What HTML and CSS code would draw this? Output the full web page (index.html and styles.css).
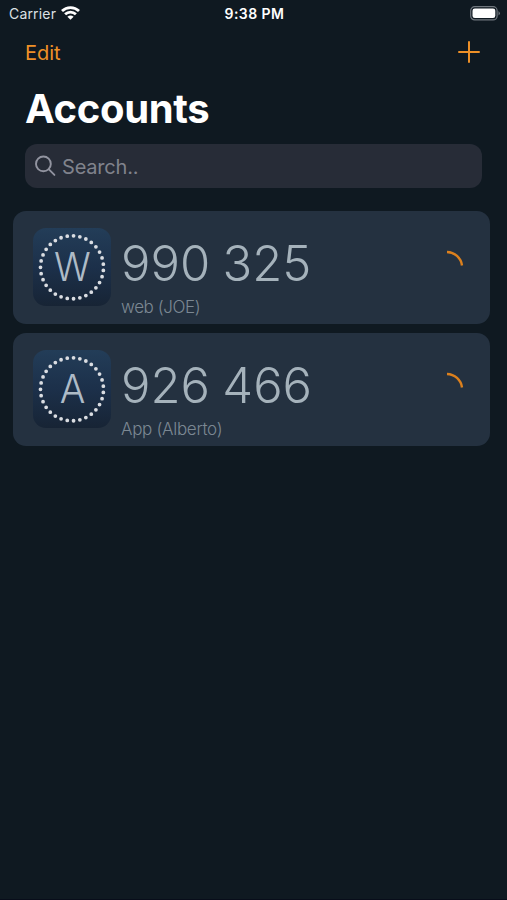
FILE: index.html
```html
<!DOCTYPE html>
<html lang="en">
<head>
<meta charset="utf-8">
<title>Accounts</title>
<link rel="stylesheet" href="styles.css">
</head>
<body>
<div class="status">
  <div class="carrier"><span>Carrier</span>
    <svg width="19" height="14" viewBox="0 0 19 14" fill="none" stroke="#fff" stroke-width="2.8"><path d="M1 5.1C5.8.4 13.2.4 18 5.1M4.1 8.3C7.2 5.3 11.8 5.3 14.9 8.3"/><path d="M6.4 10.7Q9.5 8.1 12.6 10.7L9.5 13.8Z" fill="#fff" stroke="none"/></svg>
  </div>
  <div class="time">9:38 PM</div>
  <svg class="battery" width="31" height="15" viewBox="0 0 31 15"><rect x=".7" y=".7" width="26.4" height="13.2" rx="4" fill="none" stroke="#70777e" stroke-width="1.2"/><rect x="2.5" y="2.5" width="22.8" height="9.6" rx="2.3" fill="#fff"/><path d="M28.5 5Q31.3 7.3 28.5 9.6Z" fill="#70777e"/></svg>
</div>
<nav class="nav">
  <span class="edit">Edit</span>
  <svg width="22" height="22" viewBox="0 0 22 22" stroke="#ee9027" stroke-width="2" stroke-linecap="round"><path d="M11 1V21M1 11H21"/></svg>
</nav>
<h1>Accounts</h1>
<div class="search">
  <svg width="22" height="22" viewBox="0 0 22 22" fill="none" stroke="#9294a0" stroke-width="1.9" stroke-linecap="round"><circle cx="8.4" cy="8.9" r="7.4"/><path d="M13.9 14.4L19.4 19.9"/></svg>
  <span>Search..</span>
</div>
<main class="list">
  <article class="card">
    <div class="icon"><svg width="78" height="78" viewBox="0 0 78 78"><circle class="dots" cx="39" cy="39.3" r="31.5" pathLength="310" transform="rotate(180 39 39.3)"/></svg><span class="letter">W</span></div>
    <div class="info"><div class="code">990 325</div><div class="name web">web (JOE)</div></div>
    <svg class="timer" width="18" height="18" viewBox="0 0 18 18"><path d="M1 2A15.5 15.5 0 0 1 16 15.5"/></svg>
  </article>
  <article class="card">
    <div class="icon"><svg width="78" height="78" viewBox="0 0 78 78"><circle class="dots" cx="39" cy="39.3" r="31.5" pathLength="310" transform="rotate(180 39 39.3)"/></svg><span class="letter">A</span></div>
    <div class="info"><div class="code">926 466</div><div class="name">App (Alberto)</div></div>
    <svg class="timer" width="18" height="18" viewBox="0 0 18 18"><path d="M1 2A15.5 15.5 0 0 1 16 15.5"/></svg>
  </article>
</main>
</body>
</html>
```
FILE: styles.css
```css
* { box-sizing: border-box; }
body { margin: 0; height: 900px; overflow: hidden; background: #0f1921; border-bottom: 1px solid #080d1a; color: #fff; font-family: Inter, "Liberation Sans", sans-serif; }
svg { display: block; flex: none; }
.status { height: 28px; padding: 0 6px 0 9px; display: grid; grid-template-columns: 1fr auto 1fr; align-items: center; font-size: 14px; line-height: 28px; }
.carrier { display: flex; align-items: center; gap: 5px; color: #dce0e4; letter-spacing: .18px; }
.carrier svg { margin-top: -2px; }
.time { font-weight: 600; font-size: 14px; letter-spacing: .45px; margin-right: 1px; }
.battery { justify-self: end; margin-top: -1px; }
.nav { height: 48px; padding: 0 27px 0 25px; display: flex; justify-content: space-between; align-items: center; color: #ee9027; }
.edit { font-size: 20px; letter-spacing: 0; padding-top: 1px; }
h1 { margin: 8px 0 0 25px; height: 50px; line-height: 50px; font-size: 40px; font-weight: 700; letter-spacing: -.35px; }
.search { margin: 10px 25px 0; height: 44px; border-radius: 12px; background: #272c37; padding-left: 10px; display: flex; align-items: center; gap: 5px; color: #80838c; font-size: 20px; letter-spacing: -.2px; }
.search span { padding-top: 1px; }
.list { margin: 23px 17px 0 13px; display: grid; gap: 9px; }
.card { height: 113px; border-radius: 13px; background: #243140; display: flex; padding: 0 26px 0 20px; }
.icon { width: 78px; height: 78px; margin-top: 17px; border-radius: 13px; display: grid; place-items: center; background: linear-gradient(#233d58, #1c304a 50%, #172435); }
.icon > * { grid-area: 1 / 1; }
.dots { fill: none; stroke: #dadde2; stroke-width: 3.8; stroke-linecap: round; stroke-dasharray: 0 10; }
.letter { font-size: 40px; font-weight: 300; color: #aebbc7; line-height: 1; transform: scaleX(.95); }
.info { margin: 23px 0 0 10px; flex: 1; }
.code { font-size: 49px; line-height: 60px; font-weight: 300; color: #a5b2bb; letter-spacing: 0; word-spacing: -1.5px; white-space: nowrap; }
.name { font-size: 17px; line-height: 24px; margin-top: 1px; font-weight: 300; color: #7c8893; letter-spacing: -.3px; }
.web { letter-spacing: -.4px; }
.timer { margin-top: 39px; fill: none; stroke: #dc801d; stroke-width: 2.4; }
```
